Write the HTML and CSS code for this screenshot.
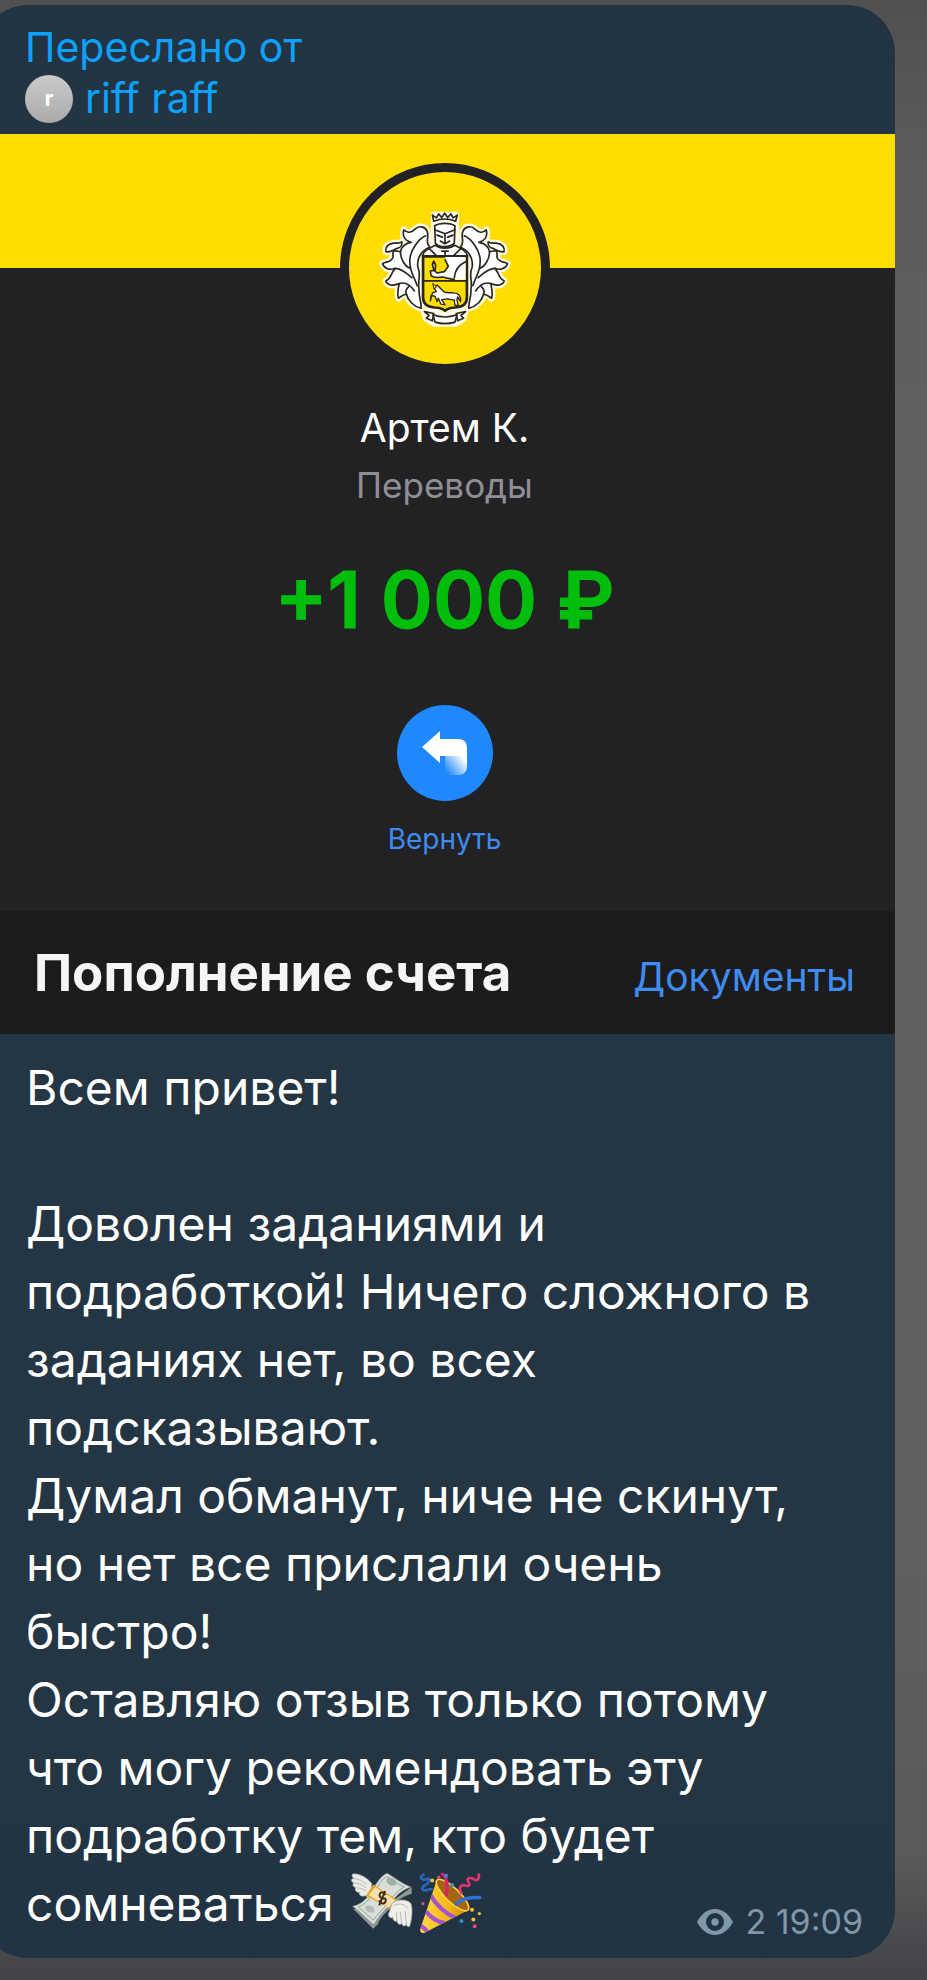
FILE: index.html
```html
<!DOCTYPE html>
<html lang="ru">
<head>
<meta charset="utf-8">
<meta name="viewport" content="width=device-width, initial-scale=1">
<title>Пересланное сообщение</title>
<link rel="stylesheet" href="styles.css">
</head>
<body>
<article class="bubble">
  <header class="forward">
    <span>Переслано от</span>
    <a class="source" href="#"><span class="avatar">r</span>riff raff</a>
  </header>

  <section class="photo">
    <div class="banner"></div>
    <div class="receipt">
      <div class="badge">
        <svg class="crest" viewBox="57 66 578 578" aria-hidden="true">
          <defs>
            <g id="wing">
              <path d="M300 292C284 278 300 262 292 244C286 230 266 226 256 238C246 248 232 252 222 240C216 262 228 274 244 278C226 280 214 292 212 306C196 304 186 296 190 322C182 342 168 334 158 342C164 358 180 362 196 356C180 374 186 386 168 394C172 408 192 410 208 402C204 420 202 434 206 446C214 440 222 434 230 434C234 452 250 470 274 476C276 458 266 440 268 420C262 390 276 378 264 352C262 330 270 306 300 292Z"/>
              <path d="M168 306C166 290 176 282 192 280C204 280 210 282 216 276C218 288 210 294 202 296C190 300 186 308 168 306Z"/>
              <path fill="none" d="M288 258C268 266 240 300 240 334C240 370 254 380 262 408M212 306C212 330 226 350 240 356M196 356C216 356 232 372 246 384M208 402C226 396 240 404 254 424M230 434C226 426 230 416 236 412"/>
            </g>
          </defs>
          <g fill="#fffbe6" stroke="#fffbe6" stroke-width="20" stroke-linejoin="round">
            <use href="#wing"/>
            <use href="#wing" transform="translate(692 0) scale(-1 1)"/>
            <path d="M314 196L378 196L380 296L412 320V452C402 474 380 476 346 488C310 476 286 470 280 450V320L312 296Z"/>
            <path d="M284 488L406 488L400 508L378 522H314L290 508Z"/>
          </g>
          <g fill="#fff" stroke="#29251f" stroke-width="5" stroke-linejoin="round" stroke-linecap="round">
            <use href="#wing"/>
            <use href="#wing" transform="translate(692 0) scale(-1 1)"/>
            <path d="M278 318C284 302 300 294 316 294L376 294C394 294 408 304 414 318Z"/>
            <path d="M312 214L308 196L320 204L327 192L336 203L345 190L354 203L364 192L370 204L383 196L378 214C358 206 332 206 312 214Z"/>
            <path d="M315 228C330 218 362 218 376 228L374 280C364 294 326 294 317 280Z"/>
            <path fill="none" d="M315 240L346 252L376 240M346 252V280M322 256L338 262M370 256L354 262M332 274L346 282L360 274"/>
            <path d="M298 296L318 286C330 298 362 298 374 286L394 296L372 318L346 330L320 318Z"/>
            <path fill="none" d="M336 304H356M346 304V318"/>
            <path fill="#fd0" stroke-width="8" d="M280 320H412V444C412 462 400 472 378 474C362 474 352 478 346 484C340 478 330 474 314 474C292 472 280 462 280 444Z"/>
            <path stroke="none" d="M346 322H408V390H378L356 384L338 382L322 384L306 378L302 364L316 362L324 370L344 366L356 350Z"/>
            <path fill="none" d="M304 378C312 386 326 384 338 382L374 390M346 330L356 350L344 366L322 370L314 362L302 364L304 378M312 360L308 344L312 334L318 346L316 362M408 336C390 344 376 362 374 384"/>
            <path fill="none" d="M282 394H410"/>
            <path stroke-width="4" d="M322 456L316 440L304 438L302 454L308 430L320 426L314 416L322 406L332 416L342 426C352 432 362 428 372 430C388 430 394 440 393 456L384 442L382 452L386 468H376L374 452L354 448L336 450L346 466L334 464L326 446Z"/>
            <path fill="#fd0" stroke-width="3" d="M310 402L320 412L314 418Z"/>
            <path d="M284 486L312 492L308 514L290 506L298 498Z"/>
            <path d="M408 486L380 492L384 514L402 506L394 498Z"/>
            <path d="M310 496C332 504 360 504 382 496L376 518C356 524 336 524 316 518Z"/>
          </g>
        </svg>
      </div>
      <h1 class="payer">Артем К.</h1>
      <p class="category">Переводы</p>
      <p class="amount">+1 000 ₽</p>
      <button class="refund" type="button">
        <svg class="refund-icon" viewBox="0 0 96 96" aria-hidden="true">
          <defs>
            <linearGradient id="fade" gradientUnits="userSpaceOnUse" x1="66" y1="52" x2="48" y2="66">
              <stop offset="0" stop-color="#fff"/>
              <stop offset="1" stop-color="#fff" stop-opacity="0"/>
            </linearGradient>
          </defs>
          <circle cx="48" cy="48" r="48" fill="#1e88fc"/>
          <path fill="#fff" d="M25 42L43 26V34H61Q70 34 70 43V51H43V58Z"/>
          <path fill="url(#fade)" d="M53 51H70V61Q70 70 61 70H48V51Z"/>
        </svg>
        <span>Вернуть</span>
      </button>
    </div>
    <footer class="documents">
      <h2>Пополнение счета</h2>
      <a href="#">Документы</a>
    </footer>
  </section>

  <div class="message">
    <p>Всем привет!</p>
    <p class="spaced">Доволен заданиями и подработкой! Ничего сложного в заданиях нет, во всех подсказывают.</p>
    <p>Думал обманут, ниче не скинут, но нет все прислали очень быстро!</p>
    <p>Оставляю отзыв только потому что могу рекомендовать эту подработку тем, кто будет сомневаться
      <svg class="emoji" viewBox="0 0 190 186" role="img" aria-label="Деньги с крыльями">
        <path fill="#e9ebe6" stroke="#a9ada7" stroke-width="2" d="M66 32C50 12 30 2 10 2C4 4 6 12 12 16C2 16 2 26 12 30C6 34 8 42 18 44C12 50 18 58 28 58C26 66 36 72 46 68L60 76Z"/>
        <path fill="none" stroke="#b8bcb6" stroke-width="3" d="M12 16Q34 18 50 34M12 30Q34 30 48 44M20 44Q36 44 48 54"/>
        <path fill="#8f9795" d="M10 108L70 168L84 154C92 130 112 116 128 100C142 82 160 70 186 62V42L120 90Z"/>
        <path fill="#d9ded8" stroke="#828c86" stroke-width="2" d="M8 100C40 92 50 76 66 54C80 30 92 8 112 0C132 12 154 30 184 42C160 50 144 62 130 82C112 108 90 122 72 156C50 138 30 116 8 100Z"/>
        <path fill="none" stroke="#8ea293" stroke-width="3" d="M26 102C52 92 60 72 76 54C88 34 96 18 112 10C130 22 144 34 164 42C144 52 132 66 118 86C102 108 84 122 70 142Z"/>
        <ellipse cx="125" cy="26" rx="16" ry="11" fill="#9eafa2" transform="rotate(28 125 26)"/>
        <ellipse cx="60" cy="108" rx="15" ry="10" fill="#b2bdb2" transform="rotate(30 60 108)"/>
        <path fill="#e6a429" d="M70 34L144 82L128 110L48 68Z"/>
        <path fill="#f5dfac" d="M77 42L136 82L116 104L56 66Z"/>
        <path fill="none" stroke="#422c16" stroke-width="6" d="M106 66C100 50 84 60 91 72C97 82 109 70 108 82C106 96 91 93 88 82M106 54L88 97"/>
        <path fill="#efefea" stroke="#a9ada7" stroke-width="2" d="M128 90C150 76 174 80 184 92C190 112 186 140 180 160C174 164 170 158 170 154C166 162 158 160 156 152C150 158 142 152 142 144C134 148 128 140 130 134C120 138 112 128 118 118Z"/>
        <path fill="none" stroke="#b3b6b0" stroke-width="3" d="M132 98C148 88 168 94 174 106M170 154L166 114M156 152L152 118M142 144L140 118"/>
      </svg><svg class="emoji" viewBox="0 0 190 186" role="img" aria-label="Хлопушка">
        <defs>
          <linearGradient id="cone">
            <stop offset="0" stop-color="#ffd848"/>
            <stop offset=".6" stop-color="#f7b714"/>
            <stop offset="1" stop-color="#c9810d"/>
          </linearGradient>
          <clipPath id="cone-shape"><path d="M54 20L4 168C2 180 10 184 20 178L148 112C128 100 76 54 54 20Z"/></clipPath>
        </defs>
        <path fill="url(#cone)" d="M54 20L4 168C2 180 10 184 20 178L148 112C128 100 76 54 54 20Z"/>
        <path clip-path="url(#cone-shape)" fill="none" stroke="#a454cf" stroke-width="13" d="M32 62C50 94 80 122 112 136M18 112C34 132 54 148 78 150M2 156C14 164 24 174 32 184"/>
        <ellipse cx="101" cy="66" rx="65" ry="21" fill="#a66514" stroke="#ffd141" stroke-width="5" transform="rotate(44 101 66)"/>
        <path fill="none" stroke="#db2462" stroke-width="10" stroke-linecap="round" d="M82 66C88 42 84 10 70 2"/>
        <path fill="none" stroke="#2c71d5" stroke-width="10" stroke-linecap="round" d="M112 94C128 76 158 72 184 74"/>
        <path fill="none" stroke="#2865bc" stroke-width="8" stroke-linecap="round" d="M14 4C-4 16 10 22 24 18C42 14 28 32 16 38C2 46 14 56 26 50L38 48"/>
        <path fill="none" stroke="#e33470" stroke-width="8" stroke-linecap="round" d="M128 60C116 42 130 32 142 38C156 42 152 30 148 24C142 10 162 14 168 20C180 24 182 10 180 4"/>
        <g fill="#348ddd"><circle cx="82" cy="8" r="6"/><circle cx="100" cy="36" r="6"/><circle cx="128" cy="144" r="6"/></g>
        <g fill="#f1c333"><circle cx="40" cy="22" r="6"/><circle cx="160" cy="110" r="6"/><circle cx="164" cy="140" r="6"/><circle cx="182" cy="122" r="5"/></g>
        <g fill="#e94580"><circle cx="60" cy="12" r="5"/><circle cx="12" cy="92" r="5"/><circle cx="168" cy="160" r="6"/></g>
      </svg><span class="meta">
        <svg class="eye" viewBox="0 0 108 78" aria-hidden="true">
          <path fill="#7f98a9" fill-rule="evenodd" d="M0 39C12 16 31 0 54 0S96 16 108 39C96 62 77 78 54 78S12 62 0 39ZM54 12A27 27 0 1 0 54 66A27 27 0 1 0 54 12Z"/>
          <circle cx="54" cy="39" r="11" fill="#7f98a9"/>
        </svg>
        <span>2 <time>19:09</time></span>
      </span>
    </p>
  </div>
</article>
</body>
</html>
```
FILE: styles.css
```css
* {
  box-sizing: border-box;
}

body {
  margin: 0;
  min-height: 100vh;
  overflow-x: hidden;
  background: linear-gradient(#505050, #5b5b5b 8%, #616161 25%, #616161 75%, #58595a 94%, #414346);
  font-family: Inter, "Noto Sans", sans-serif;
}

h1,
h2,
p {
  margin: 0;
  font-weight: 400;
}

a {
  color: inherit;
  text-decoration: none;
}

.bubble {
  margin: 5px 32px 22px -20px;
  border-radius: 48px;
  overflow: hidden;
  background: linear-gradient(#223341, #243544 12%, #243544 90%, #213242);
}

.forward {
  display: flex;
  flex-direction: column;
  padding: 17px 45px 10px;
  color: #0ea1fc;
  font-size: 41px;
  line-height: 51px;
}

.source {
  display: flex;
  align-items: center;
  gap: 12px;
}

.avatar {
  width: 48px;
  height: 48px;
  border-radius: 50%;
  background: linear-gradient(#cbcbcb, #aaa);
  color: #fff;
  font-size: 22px;
  font-weight: 700;
  line-height: 46px;
  text-align: center;
}

.photo {
  background: #222224;
}

.banner {
  height: 134px;
  background: #fd0;
}

.receipt {
  display: flex;
  flex-direction: column;
  align-items: center;
  margin-top: -105px;
  padding: 0 0 54px 14px;
}

.badge {
  width: 210px;
  height: 210px;
  border: 9px solid #222224;
  border-radius: 50%;
  background: #fd0;
}

.crest {
  display: block;
}

.payer {
  margin-top: 30px;
  color: #fff;
  font-size: 39px;
  line-height: 50px;
}

.category {
  margin-top: 9px;
  color: #8f8f96;
  font-size: 35px;
  line-height: 46px;
}

.amount {
  margin-top: 43px;
  color: #00be0b;
  font-size: 79px;
  font-weight: 600;
  line-height: 96px;
  -webkit-text-stroke: 1px #00be0b;
  stroke-linejoin: round;
}

.refund {
  display: flex;
  flex-direction: column;
  align-items: center;
  gap: 20px;
  margin-top: 58px;
  padding: 0;
  border: 0;
  background: none;
  color: #3f8cf0;
  font: inherit;
  font-size: 28px;
  line-height: 36px;
}

.refund-icon {
  width: 96px;
  height: 96px;
}

.documents {
  display: flex;
  align-items: baseline;
  justify-content: space-between;
  padding: 31px 40px 26px 54px;
  background: #1c1c1e;
  color: #3f8cf0;
  font-size: 39px;
  line-height: 62px;
}

.documents h2 {
  color: #f5f5f8;
  font-size: 51px;
  font-weight: 700;
}

.message {
  padding: 20px 46px;
  color: #fff;
  font-size: 48px;
  line-height: 68px;
}

.spaced {
  margin-top: 68px;
}

.emoji {
  width: 63px;
  height: 62px;
  margin: -8px 3px;
  vertical-align: -6px;
}

.meta {
  float: right;
  display: flex;
  align-items: center;
  gap: 12px;
  margin: 32px -14px -4px 0;
  color: #7f98a9;
  font-size: 34px;
  line-height: 40px;
}

.eye {
  width: 36px;
  height: 26px;
}
```
